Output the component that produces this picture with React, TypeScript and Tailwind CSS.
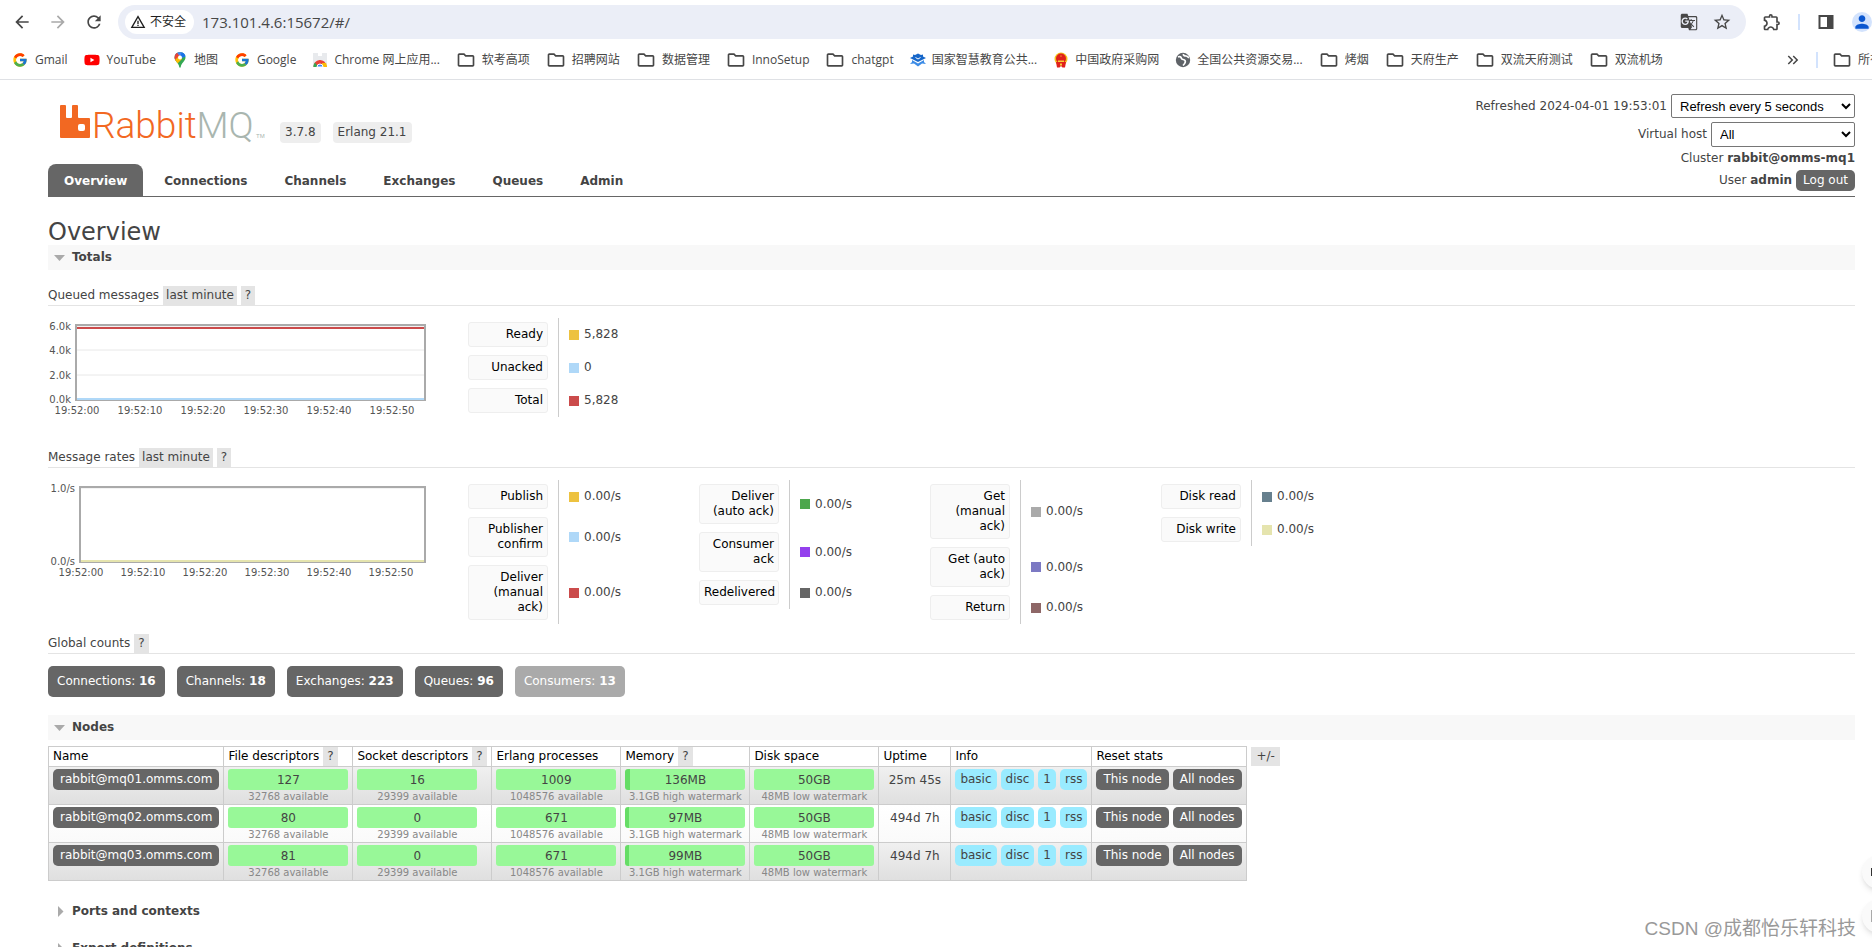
import type { ReactNode } from 'react'
import { FcGoogle } from 'react-icons/fc'
import { FaYoutube } from 'react-icons/fa'
import {
  MdArrowBack,
  MdArrowForward,
  MdGTranslate,
  MdKeyboardDoubleArrowRight,
  MdOutlineExtension,
  MdOutlineFolder,
  MdPerson,
  MdRefresh,
  MdStarBorder,
  MdWarningAmber,
} from 'react-icons/md'

const MapPin = () => (
  <svg width="16" height="18" viewBox="0 0 16 18">
    <clipPath id="pin"><path d="M8 1a5.500 5.500 0 0 0-5.500 5.500C2.500 10.500 7 11.500 7.300 16.500h1.400C9 11.500 13.500 10.500 13.500 6.500A5.500 5.500 0 0 0 8 1z" /></clipPath>
    <g clipPath="url(#pin)">
      <rect width="16" height="18" fill="#34a853" />
      <path d="M0 0h16v4L8 8 0 2z" fill="#4285f4" />
      <path d="M0 0h4l4 6-5 4H0z" fill="#ea4335" />
      <path d="M0 12l8-8 2 4-5 5z" fill="#fbbc04" />
      <path d="M10 0h6v5l-8 2z" fill="#1a73e8" />
    </g>
    <circle cx="8" cy="6.500" r="2" fill="#fff" />
  </svg>
)

const WebStore = () => (
  <svg width="16" height="16" viewBox="0 0 16 16">
    <path d="M1 1h14v14H1z" fill="#e8eaed" />
    <path d="M6 1h4v3H6z" fill="#fff" />
    <path d="M1.500 15a6.500 6.500 0 0 1 13-1l.5 1z" fill="#ea4335" />
    <path d="M1.500 15a6.500 6.500 0 0 1 1.500-4.500L6 15z" fill="#34a853" />
    <path d="M10 11h4.200l.8 4h-5z" fill="#fbbc04" />
    <path d="M5 15a3 3 0 0 1 6 0z" fill="#4285f4" stroke="#fff" />
  </svg>
)

const EduIcon = () => (
  <svg width="16" height="16" viewBox="0 0 16 16">
    <path d="M8 1.500l3 1.500 2-.5v2l3 1.500L8 10 0 6l3-1.500v-2l2 .5z" fill="#1767c9" />
    <path d="M2 8l6 3.500L14 8v2l2 2-4-.500L8 14.500 4 11.500 0 12l2-2z" fill="#3b8be6" />
    <path d="M5.500 5.500L8 7l2.500-1.500" stroke="#fff" fill="none" />
  </svg>
)

const Emblem = () => (
  <svg width="16" height="16" viewBox="0 0 16 16">
    <circle cx="8" cy="7" r="6.500" fill="#f3c21c" />
    <circle cx="8" cy="6.500" r="5" fill="#e0201b" />
    <path d="M3 10h10l-1 5.500H9.500L8 14l-1.500 1.500H4z" fill="#e0201b" />
    <path d="M5 8.500h6v1.500H5zM8 3l.8 1.500H7.200zM7 11.500h2v2H7z" fill="#f7d038" />
  </svg>
)

const Globe = () => (
  <svg width="16" height="16" viewBox="0 0 16 16">
    <circle cx="8" cy="8" r="7.200" fill="#5f6368" />
    <path d="M3 5c2-1 3 0 3.500 1.500S9 7 10 8.500 9.500 12 8 13.500M8.500 2c-.5 1.500 1 2 2.500 2s2 1.500 3 1.500" stroke="#fff" strokeWidth="1.700" fill="none" />
  </svg>
)

const Folder = () => <MdOutlineFolder className="size-5 text-[#474747]" />
const Google = () => <FcGoogle className="mr-px size-4" />

const bookmarks: [ReactNode, string][] = [
  [<Google />, 'Gmail'],
  [<FaYoutube className="mr-px size-4 text-[#f00]" />, 'YouTube'],
  [<MapPin />, '地图'],
  [<Google />, 'Google'],
  [<WebStore />, 'Chrome 网上应用...'],
  [<Folder />, '软考高项'],
  [<Folder />, '招聘网站'],
  [<Folder />, '数据管理'],
  [<Folder />, 'InnoSetup'],
  [<Folder />, 'chatgpt'],
  [<EduIcon />, '国家智慧教育公共...'],
  [<Emblem />, '中国政府采购网'],
  [<Globe />, '全国公共资源交易...'],
  [<Folder />, '烤烟'],
  [<Folder />, '天府生产'],
  [<Folder />, '双流天府测试'],
  [<Folder />, '双流机场'],
]

function BrowserBar() {
  return (
    <div className="shrink-0 border-b border-[#dfe1e5] bg-white font-['Open_Sans','Noto_Sans_CJK_SC',sans-serif] text-[#474747]">
      <div className="flex h-11 items-center">
        <div className="flex shrink-0 items-center gap-4 pl-3 pr-[14px]">
          <button aria-label="Back"><MdArrowBack className="size-5" /></button>
          <button aria-label="Forward"><MdArrowForward className="size-5 text-[#a9a9a9]" /></button>
          <button aria-label="Reload"><MdRefresh className="size-5" /></button>
        </div>
        <div className="flex h-[34px] grow items-center rounded-full bg-[#ebeef7] pl-[7px] pr-[14px]">
          <button className="flex h-6 shrink-0 items-center gap-1 rounded-full bg-white px-[5px] pr-2 text-xs text-[#1f1f1f]">
            <MdWarningAmber className="size-4" />
            不安全
          </button>
          <input aria-label="Address" className="ml-2 grow bg-transparent text-[15px] outline-none" defaultValue="173.101.4.6:15672/#/" />
          <button aria-label="Translate" className="mr-[14px]"><MdGTranslate className="size-[18px]" /></button>
          <button aria-label="Bookmark this page"><MdStarBorder className="size-5" /></button>
        </div>
        <div className="flex shrink-0 items-center pl-4">
          <button aria-label="Extensions"><MdOutlineExtension className="size-5" /></button>
          <span className="ml-4 h-4 w-[2px] bg-[#d3e3fd]" />
          <button aria-label="Side panel" className="ml-[18px]">
            <svg width="16" height="16" viewBox="0 0 16 16">
              <rect x="1.500" y="2" width="13" height="12" fill="none" stroke="currentColor" strokeWidth="2" />
              <path d="M9 2h6v12H9z" fill="currentColor" />
            </svg>
          </button>
          <button aria-label="Profile" className="ml-[18px] rounded-full bg-[#d3e3fd] text-[#0b57d0]">
            <MdPerson className="size-5" />
          </button>
        </div>
      </div>
      <div className="flex h-[35px] items-center overflow-hidden pb-1 pl-3 text-xs whitespace-nowrap">
        <div className="flex grow gap-4">
          {bookmarks.map(([icon, name]) => (
            <a key={name} href="#" className="flex items-center gap-[6px]">{icon}{name}</a>
          ))}
        </div>
        <button aria-label="More bookmarks"><MdKeyboardDoubleArrowRight className="size-[18px]" /></button>
        <span className="ml-[14px] h-4 w-[2px] bg-[#d3e3fd]" />
        <a href="#" className="-mr-[10px] ml-[14px] flex items-center gap-[6px]"><Folder />所有</a>
      </div>
    </div>
  )
}

const Logo = () => (
  <svg width="206" height="44" viewBox="0 0 206 44" role="img" aria-label="RabbitMQ" className="overflow-visible">
    <path fill="#f26822" fillRule="evenodd" d="M1 5h4q1 0 1 1v11q0 1 1 1h4q1 0 1-1V6q0-1 1-1h4q1 0 1 1v11q0 1 1 1h10q1 0 1 1v18q0 1-1 1H1q-1 0-1-1V6q0-1 1-1zM20 24q-2 0-2 2v3q0 2 2 2h3q2 0 2-2v-3q0-2-2-2z" />
    <text x="32" y="38" className="font-['Roboto',sans-serif] text-[37px] font-light">
      <tspan fill="#f26822">Rabbit</tspan><tspan fill="#a9b6af">MQ</tspan>
    </text>
    <text x="196" y="38" fill="#a9b6af" className="font-['Liberation_Sans',sans-serif] text-[6px]">TM</text>
  </svg>
)

const tabs = ['Connections', 'Channels', 'Exchanges', 'Queues', 'Admin']

function Header() {
  return (
    <header className="flex items-end justify-between border-b border-[#666] pt-[14px]">
      <div>
        <div className="mb-5 flex items-end pl-3">
          <Logo />
          <span className="mb-px ml-[14px] rounded-[4px] bg-[#eee] px-[5px] py-[3px]">3.7.8</span>
          <span className="mb-px ml-3 rounded-[4px] bg-[#eee] px-[5px] py-[3px]">Erlang 21.1</span>
        </div>
        <nav className="flex gap-[5px] font-bold">
          <a href="#/" className="h-8 rounded-t-lg bg-[#666] px-4 leading-[34px] text-white">Overview</a>
          {tabs.map(t => (
            <a key={t} href={`#/${t.toLowerCase()}`} className="h-8 px-4 leading-[34px]">{t}</a>
          ))}
        </nav>
      </div>
      <div className="flex flex-col items-end gap-1 pb-[5px]">
        <label className="flex items-center gap-1">
          Refreshed 2024-04-01 19:53:01
          <select className="h-6 w-[184px] rounded-[2px] border border-[#767676] bg-white px-1 font-['Liberation_Sans',sans-serif] text-[13px] text-black">
            <option>Refresh every 5 seconds</option>
          </select>
        </label>
        <label className="flex items-center gap-1">
          Virtual host
          <select className="h-[25px] w-36 rounded-[2px] border border-[#767676] bg-white px-1 font-['Liberation_Sans',sans-serif] text-[13px] text-black">
            <option>All</option>
          </select>
        </label>
        <div>Cluster <b>rabbit@omms-mq1</b></div>
        <div className="flex items-center gap-1">
          <span>User <b>admin</b></span>
          <button className="rounded-[5px] bg-[#666] px-[7px] py-[3px] text-white">Log out</button>
        </div>
      </div>
    </header>
  )
}

const Help = () => <button className="h-[19px] bg-[#e4e4e4] px-1 text-[#444]">?</button>

function OpenSection({ title }: { title: string }) {
  return (
    <h2 className="flex h-[25px] items-center gap-[7px] bg-[#f8f8f8] pl-[6px] font-bold">
      <svg width="11" height="6"><path d="M0 0h11L5.500 6z" fill="#aaa" /></svg>
      {title}
    </h2>
  )
}

function ClosedSection({ title }: { title: string }) {
  return (
    <h2 className="flex h-[25px] items-center gap-2 pl-[10px] font-bold">
      <svg width="6" height="11"><path d="M0 0v11l5.500-5.500z" fill="#aaa" /></svg>
      {title}
    </h2>
  )
}

function SubHead({ title, period }: { title: string; period?: boolean }) {
  return (
    <h3 className="mb-3 flex h-5 items-center gap-1 border-b border-[#e4e4e4]">
      {title}
      {period && <button className="h-[19px] bg-[#e4e4e4] px-[3px]">last minute</button>}
      <Help />
    </h3>
  )
}

type ChartProps = { left: number; yTicks: [string, number][]; xStart: number; xStep: number; lines: [string, number][] }

function Chart({ left, yTicks, xStart, xStep, lines }: ChartProps) {
  return (
    <svg width="400" height="100" className="shrink-0 text-[10px]" fill="#545454">
      {yTicks.map(([label, y]) => (
        <g key={label}>
          <text x={left - 4} y={y + 4} textAnchor="end">{label}</text>
          <path d={`M${left + 1} ${y}H377`} stroke="#e8e8e8" />
        </g>
      ))}
      <rect x={left + 1} y="7" width={376 - left} height="75" fill="none" stroke="#aaa" strokeWidth="2" />
      {lines.map(([color, y]) => (
        <path key={color} d={`M${left + 2} ${y}H376`} stroke={color} strokeWidth="2" />
      ))}
      {[0, 1, 2, 3, 4, 5].map(i => (
        <text key={i} x={xStart + i * xStep} y="96" textAnchor="middle">{`19:52:${i}0`}</text>
      ))}
    </svg>
  )
}

function Legend({ rows }: { rows: [string, string, string][] }) {
  return (
    <div className="w-[231px]">
      <table className="border-collapse">
        <tbody>
          {rows.map(([name, color, value]) => (
            <tr key={name}>
              <th className="border-r border-[#ccc] py-1 pr-[10px] font-normal">
                <button className="block w-20 rounded-[3px] border border-[#eee] bg-[#fafafa] px-1 py-1 text-right text-black">{name}</button>
              </th>
              <td className="pl-[10px]">
                <span className="flex items-center gap-[5px]">
                  <i className="size-[10px]" style={{ background: color }} />
                  {value}
                </span>
              </td>
            </tr>
          ))}
        </tbody>
      </table>
    </div>
  )
}

const rate = '0.00/s'
const rates: [string, string, string][][] = [
  [['Publish', '#edc240', rate], ['Publisher confirm', '#afd8f8', rate], ['Deliver (manual ack)', '#cb4b4b', rate]],
  [['Deliver (auto ack)', '#4da74d', rate], ['Consumer ack', '#9440ed', rate], ['Redelivered', '#666666', rate]],
  [['Get (manual ack)', '#aaaaaa', rate], ['Get (auto ack)', '#7c79c3', rate], ['Return', '#8e6767', rate]],
  [['Disk read', '#67808e', rate], ['Disk write', '#e5e4ae', rate]],
]

const counts: [string, number][] = [['Connections', 16], ['Channels', 18], ['Exchanges', 223], ['Queues', 96]]

const nodes = [
  { name: 'rabbit@mq01.omms.com', fd: 127, sockets: 16, procs: 1009, mem: '136MB', memWidth: 5, uptime: '25m 45s' },
  { name: 'rabbit@mq02.omms.com', fd: 80, sockets: 0, procs: 671, mem: '97MB', memWidth: 4, uptime: '494d 7h' },
  { name: 'rabbit@mq03.omms.com', fd: 81, sockets: 0, procs: 671, mem: '99MB', memWidth: 4, uptime: '494d 7h' },
]

function Bar({ value, note, used = 0 }: { value: ReactNode; note: string; used?: number }) {
  return (
    <div className="w-[120px] text-center">
      <div
        className="h-[21px] rounded-[3px] leading-[22px]"
        style={{ background: `linear-gradient(to right, #66dd66 ${used}px, #98f898 ${used}px)` }}
      >
        {value}
      </div>
      <div className="text-[10px] leading-[14px] text-[#888]">{note}</div>
    </div>
  )
}

const th = 'h-5 border border-[#ccc] px-1 text-left font-normal text-black'
const td = 'h-[38px] border border-[#ccc] px-1 pt-[2px] align-top'
const dark = 'inline-block rounded-[5px] bg-[#666] py-[3px] text-white'

function NodesTable() {
  return (
    <div className="mt-[6px] flex items-start gap-1">
      <table className="border-collapse whitespace-nowrap">
        <thead>
          <tr>
            <th className={`${th} w-[175px]`}>Name</th>
            <th className={`${th} w-[129px]`}><span className="flex gap-1"><span className="leading-[19px]">File descriptors</span><Help /></span></th>
            <th className={`${th} w-[139px]`}><span className="flex gap-1"><span className="leading-[19px]">Socket descriptors</span><Help /></span></th>
            <th className={`${th} w-[129px]`}>Erlang processes</th>
            <th className={`${th} w-[129px]`}><span className="flex gap-1"><span className="leading-[19px]">Memory</span><Help /></span></th>
            <th className={`${th} w-[129px]`}>Disk space</th>
            <th className={`${th} w-[72px]`}>Uptime</th>
            <th className={`${th} w-[139px]`}>Info</th>
            <th className={`${th} w-[155px]`}>Reset stats</th>
          </tr>
        </thead>
        <tbody>
          {nodes.map(n => (
            <tr key={n.name} className="bg-linear-to-b from-white to-[#fafafa] odd:from-[#f0f0f0] odd:to-[#dfdfdf]">
              <td className={td}><a href="#" className={`${dark} px-[7px]`}>{n.name}</a></td>
              <td className={td}><Bar value={n.fd} note="32768 available" /></td>
              <td className={td}><Bar value={n.sockets} note="29399 available" /></td>
              <td className={td}><Bar value={n.procs} note="1048576 available" /></td>
              <td className={td}><Bar value={n.mem} note="3.1GB high watermark" used={n.memWidth} /></td>
              <td className={td}><Bar value="50GB" note="48MB low watermark" /></td>
              <td className={`${td} text-center leading-[22px]`}>{n.uptime}</td>
              <td className={td}>
                <span className="flex gap-1">
                  {['basic', 'disc', '1', 'rss'].map(s => (
                    <abbr key={s} className="rounded-[5px] bg-[#99ebff] px-[5px] py-[3px] no-underline">{s}</abbr>
                  ))}
                </span>
              </td>
              <td className={td}>
                <span className="flex gap-1">
                  <button className={`${dark} px-[7px]`}>This node</button>
                  <button className={`${dark} px-[7px]`}>All nodes</button>
                </span>
              </td>
            </tr>
          ))}
        </tbody>
      </table>
      <button className="mt-px h-[19px] bg-[#e4e4e4] px-[5px]">+/-</button>
    </div>
  )
}

export default function App() {
  return (
    <div className="relative flex h-screen flex-col overflow-hidden bg-white font-['DejaVu_Sans',Verdana,sans-serif] text-xs leading-[15px] text-[#444]">
      <BrowserBar />
      <main className="min-h-0 grow overflow-hidden pl-12 pr-[17px]">
        <Header />
        <h1 className="mt-5 h-7 text-2xl leading-[30px]">Overview</h1>
        <OpenSection title="Totals" />
        <div className="mt-4">
          <SubHead title="Queued messages" period />
          <div className="flex gap-5">
            <Chart
              left={27}
              yTicks={[['6.0k', 8], ['4.0k', 32], ['2.0k', 57], ['0.0k', 81]]}
              xStart={29}
              xStep={63}
              lines={[['#cb4b4b', 10], ['#afd8f8', 81]]}
            />
            <Legend rows={[['Ready', '#edc240', '5,828'], ['Unacked', '#afd8f8', '0'], ['Total', '#cb4b4b', '5,828']]} />
          </div>
        </div>
        <div className="mt-[30px]">
          <SubHead title="Message rates" period />
          <div className="flex gap-5">
            <Chart left={31} yTicks={[['1.0/s', 8], ['0.0/s', 81]]} xStart={33} xStep={62} lines={[['#e5e4ae', 81]]} />
            <div className="flex">
              {rates.map(rows => <Legend key={rows[0][0]} rows={rows} />)}
            </div>
          </div>
        </div>
        <div className="mt-[10px]">
          <SubHead title="Global counts" />
          <div className="flex gap-3 pb-[18px] text-white">
            {counts.map(([name, n]) => (
              <a key={name} href="#" className="rounded-[5px] bg-[#666] px-[9px] py-2">{name}: <b>{n}</b></a>
            ))}
            <span className="rounded-[5px] bg-[#aaa] px-[9px] py-2">Consumers: <b>13</b></span>
          </div>
        </div>
        <OpenSection title="Nodes" />
        <NodesTable />
        <div className="mt-[18px] space-y-3">
          <ClosedSection title="Ports and contexts" />
          <ClosedSection title="Export definitions" />
        </div>
      </main>
      <div className="absolute top-[855px] -right-6 space-y-[10px]">
        <div className="flex size-[34px] items-center rounded-full bg-[#fafafa] pl-[9px] shadow-md"><i className="h-2 w-4 bg-[#333]" /></div>
        <div className="flex size-[34px] items-center rounded-full bg-[#fafafa] pl-[9px] shadow-md"><i className="h-3 w-4 border border-[#aaa]" /></div>
      </div>
      <div className="absolute right-4 bottom-1 font-['Liberation_Sans','Noto_Sans_CJK_SC',sans-serif] text-[19px] leading-7 text-[#999] [text-shadow:1px_1px_0_#fff]">
        CSDN @成都怡乐轩科技
      </div>
    </div>
  )
}
